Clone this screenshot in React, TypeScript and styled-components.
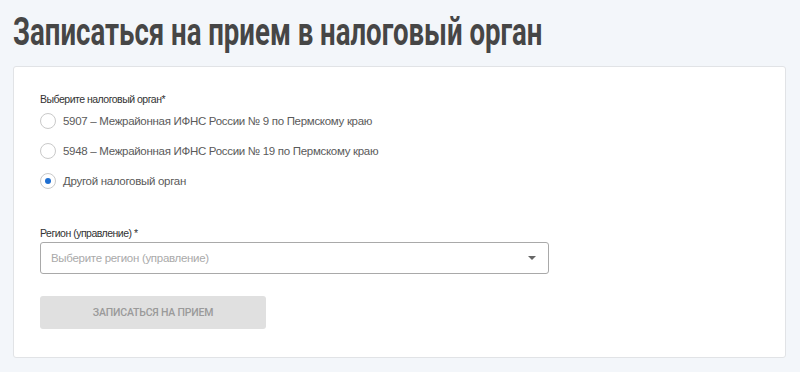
import styled, { createGlobalStyle } from 'styled-components';

const GlobalStyle = createGlobalStyle`
  html, body {
    margin: 0;
    padding: 0;
    background: #f3f6fa;
  }
  body {
    font-family: 'Liberation Sans', Arial, sans-serif;
    color: #333;
  }
`;

const options = [
  { id: '5907', label: '5907 – Межрайонная ИФНС России № 9 по Пермскому краю' },
  { id: '5948', label: '5948 – Межрайонная ИФНС России № 19 по Пермскому краю' },
  { id: 'other', label: 'Другой налоговый орган' },
];

const App = () => {
  const selected = 'other';

  return (
    <>
      <GlobalStyle />
      <Page>
        <Title>Записаться на прием в налоговый орган</Title>
        <Card>
          <FieldLabel>Выберите налоговый орган*</FieldLabel>
          <RadioList>
            {options.map((o) => (
              <RadioRow key={o.id}>
                <RadioCircle $checked={o.id === selected} />
                <RadioText>{o.label}</RadioText>
              </RadioRow>
            ))}
          </RadioList>

          <RegionField>
            <FieldLabel $gap={2}>Регион (управление) *</FieldLabel>
            <Select>
              <Placeholder>Выберите регион (управление)</Placeholder>
              <Caret />
            </Select>
          </RegionField>

          <SubmitButton disabled>Записаться на прием</SubmitButton>
        </Card>
      </Page>
    </>
  );
};

export default App;

const Page = styled.div`
  padding: 10px 14px 14px 13px;
`;

const Title = styled.h1`
  margin: 0 0 12px;
  font-family: Roboto, sans-serif;
  font-weight: bold;
  font-size: 39px;
  line-height: 44px;
  color: #464646;
  white-space: nowrap;
  transform: scaleX(0.707);
  transform-origin: left center;
`;

const Card = styled.div`
  background: #fff;
  border: 1px solid #e1e3e6;
  border-radius: 3px;
  padding: 25px 26px 28px 26px;
`;

const FieldLabel = styled.div<{ $gap?: number }>`
  font-family: 'Liberation Sans', Arial, sans-serif;
  font-size: 10.5px;
  letter-spacing: -0.5px;
  line-height: 14px;
  color: #333;
  margin-bottom: ${({ $gap }) => $gap ?? 0}px;
`;

const RadioList = styled.div`
  display: flex;
  flex-direction: column;
`;

const RadioRow = styled.label`
  display: flex;
  align-items: center;
  gap: 7px;
  height: 30px;
`;

const RadioCircle = styled.span<{ $checked?: boolean }>`
  box-sizing: border-box;
  width: 16px;
  height: 16px;
  border-radius: 50%;
  border: 1px solid #c9c9c9;
  background: #fff;
  display: flex;
  align-items: center;
  justify-content: center;

  &::after {
    content: '';
    width: 6px;
    height: 6px;
    border-radius: 50%;
    background: ${({ $checked }) => ($checked ? '#1f6fd1' : 'transparent')};
  }
`;

const RadioText = styled.span`
  font-size: 11.5px;
  letter-spacing: -0.3px;
  color: #5a5a5a;
`;

const RegionField = styled.div`
  margin-top: 30px;
`;

const Select = styled.div`
  box-sizing: border-box;
  width: 509px;
  height: 32px;
  border: 1px solid #a9a9a9;
  border-radius: 3px;
  display: flex;
  align-items: center;
  justify-content: space-between;
  padding: 0 12px 0 10px;
`;

const Placeholder = styled.span`
  font-size: 11.5px;
  letter-spacing: -0.3px;
  color: #aaa;
`;

const Caret = styled.span`
  width: 0;
  height: 0;
  border-left: 4px solid transparent;
  border-right: 4px solid transparent;
  border-top: 4px solid #666;
`;

const SubmitButton = styled.button`
  display: block;
  margin-top: 22px;
  width: 226px;
  height: 33px;
  border: none;
  border-radius: 3px;
  background: #e0e0e0;
  color: #9a9a9a;
  font-family: Roboto, sans-serif;
  font-weight: 500;
  font-size: 10.5px;
  letter-spacing: -0.2px;
  text-transform: uppercase;
  cursor: default;
`;
